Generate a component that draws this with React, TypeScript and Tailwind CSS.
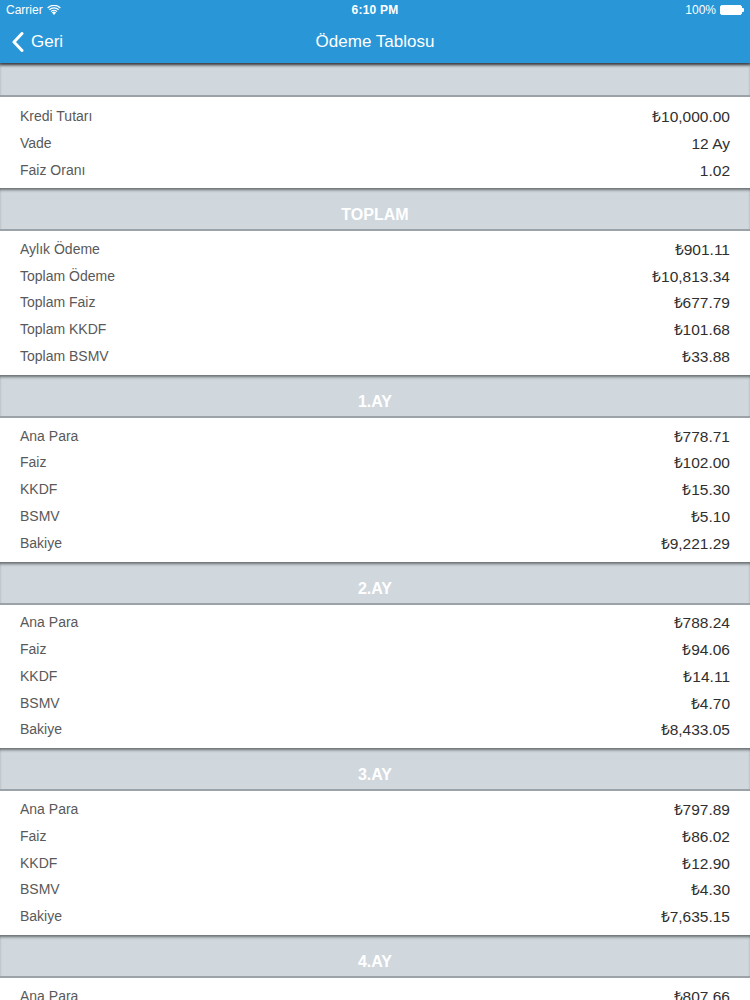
const font = { fontFamily: '"Liberation Sans", Arial, sans-serif' };

type Row = [string, string];

interface Section {
  title: string;
  rows: Row[];
}

const summary: Row[] = [
  ["Kredi Tutarı", "₺10,000.00"],
  ["Vade", "12 Ay"],
  ["Faiz Oranı", "1.02"],
];

const sections: Section[] = [
  {
    title: "TOPLAM",
    rows: [
      ["Aylık Ödeme", "₺901.11"],
      ["Toplam Ödeme", "₺10,813.34"],
      ["Toplam Faiz", "₺677.79"],
      ["Toplam KKDF", "₺101.68"],
      ["Toplam BSMV", "₺33.88"],
    ],
  },
  {
    title: "1.AY",
    rows: [
      ["Ana Para", "₺778.71"],
      ["Faiz", "₺102.00"],
      ["KKDF", "₺15.30"],
      ["BSMV", "₺5.10"],
      ["Bakiye", "₺9,221.29"],
    ],
  },
  {
    title: "2.AY",
    rows: [
      ["Ana Para", "₺788.24"],
      ["Faiz", "₺94.06"],
      ["KKDF", "₺14.11"],
      ["BSMV", "₺4.70"],
      ["Bakiye", "₺8,433.05"],
    ],
  },
  {
    title: "3.AY",
    rows: [
      ["Ana Para", "₺797.89"],
      ["Faiz", "₺86.02"],
      ["KKDF", "₺12.90"],
      ["BSMV", "₺4.30"],
      ["Bakiye", "₺7,635.15"],
    ],
  },
  {
    title: "4.AY",
    rows: [
      ["Ana Para", "₺807.66"],
      ["Faiz", "₺76.21"],
      ["KKDF", "₺11.43"],
      ["BSMV", "₺3.81"],
      ["Bakiye", "₺6,827.49"],
    ],
  },
];

function Wifi() {
  return (
    <svg width="14" height="10" viewBox="0 0 14 10" fill="white">
      <path d="M7 10 L4.9 7.6 A3 3 0 0 1 9.1 7.6 Z" />
      <path d="M3.6 6.2 A4.9 4.9 0 0 1 10.4 6.2 L9.6 7.1 A3.7 3.7 0 0 0 4.4 7.1 Z" />
      <path d="M1.9 4.3 A7.4 7.4 0 0 1 12.1 4.3 L11.2 5.3 A6.1 6.1 0 0 0 2.8 5.3 Z" />
      <path d="M0.2 2.4 A9.9 9.9 0 0 1 13.8 2.4 L12.9 3.4 A8.6 8.6 0 0 0 1.1 3.4 Z" />
    </svg>
  );
}

function Battery() {
  return (
    <div className="flex items-center">
      <div className="h-[10px] w-[22px] rounded-[2px] border border-white bg-white" />
      <div className="h-[4px] w-[2px] rounded-r-[1px] bg-white" />
    </div>
  );
}

function NavBar() {
  return (
    <div className="relative z-10 bg-[#2996d7] text-white shadow-[0_2px_3px_rgba(0,0,0,0.45)]">
      <div className="flex h-[20px] items-center justify-between px-[6px] text-[12px]">
        <div className="flex w-[120px] items-center gap-[4px]">
          <span>Carrier</span>
          <Wifi />
        </div>
        <span className="font-bold tracking-[0.2px]">6:10 PM</span>
        <div className="flex w-[120px] items-center justify-end gap-[4px]">
          <span>100%</span>
          <Battery />
        </div>
      </div>
      <div className="relative flex h-[43px] items-center">
        <div className="flex items-center pl-[12px]">
          <svg width="12" height="20" viewBox="0 0 12 20" fill="none">
            <path d="M10 1.5 L2 10 L10 18.5" stroke="white" strokeWidth="3" strokeLinecap="round" strokeLinejoin="round" />
          </svg>
          <span className="ml-[7px] text-[17px]">Geri</span>
        </div>
        <div className="absolute inset-x-0 text-center text-[17px]">Ödeme Tablosu</div>
      </div>
    </div>
  );
}

function Header({ title, className }: { title: string; className: string }) {
  return (
    <div
      className={`flex items-center justify-center border-b-2 border-[#9ca3a8] bg-[#d0d8de] pt-[13px] text-[16px] font-bold text-white shadow-[inset_0_3px_3px_-1px_rgba(0,0,0,0.5)] ${className}`}
    >
      {title}
    </div>
  );
}

function Rows({ rows, className, rowH }: { rows: Row[]; className: string; rowH: string }) {
  return (
    <div className={`bg-white ${className}`}>
      {rows.map(([label, value]) => (
        <div key={label} className={`flex items-center justify-between pl-[20px] pr-[20px] ${rowH}`}>
          <span className="text-[14px] text-[#595959]">{label}</span>
          <span className="text-[15.5px] text-[#2f2f2f]">{value}</span>
        </div>
      ))}
    </div>
  );
}

export default function App() {
  return (
    <div className="h-[1000px] w-[750px] overflow-hidden bg-white" style={font}>
      <NavBar />
      <Header title="" className="h-[34px]" />
      <Rows rows={summary} className="pt-[6px] pb-[4px]" rowH="h-[27px]" />
      {sections.map((s) => (
        <div key={s.title}>
          <Header title={s.title} className="h-[43px]" />
          <Rows rows={s.rows} className="py-[5px]" rowH="h-[26.75px]" />
        </div>
      ))}
    </div>
  );
}
